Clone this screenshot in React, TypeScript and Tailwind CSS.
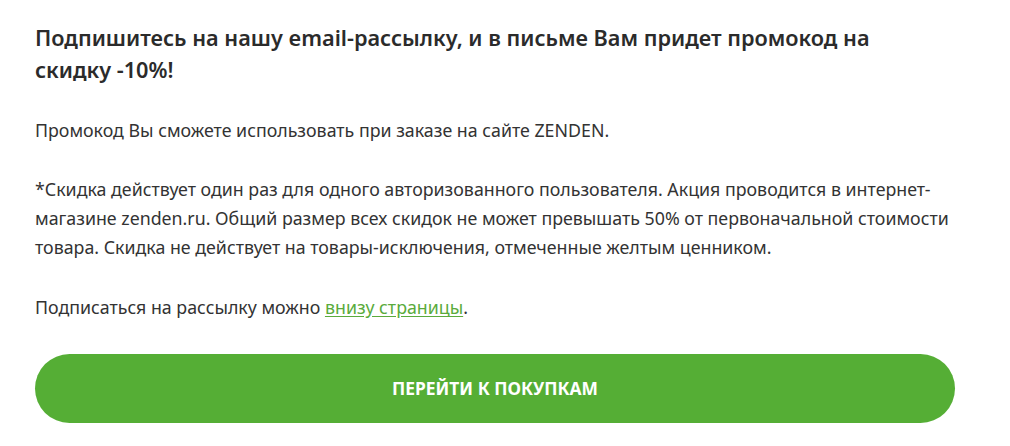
export default function App() {
  return (
    <div className="min-h-[446px] w-[1010px] bg-white" style={{ fontFamily: '"Noto Sans", "Open Sans", sans-serif' }}>
      <div className="w-[920px] pl-[35px] pt-[22px] box-content">
        <h2 className="max-w-[890px] text-[21.7px] font-semibold leading-[32px] text-[#2b2b2b]">
          Подпишитесь на нашу email-рассылку, и в письме Вам придет промокод на скидку -10%!
        </h2>
        <p className="mt-[30px] text-[17.8px] leading-[29px] text-[#333]">
          Промокод Вы сможете использовать при заказе на сайте ZENDEN.
        </p>
        <p className="mt-[30px] text-[17.8px] leading-[29px] text-[#333]">
          *Скидка действует один раз для одного авторизованного пользователя. Акция проводится в интернет-магазине zenden.ru. Общий размер всех скидок не может превышать 50% от первоначальной стоимости товара. Скидка не действует на товары-исключения, отмеченные желтым ценником.
        </p>
        <p className="mt-[31px] text-[17.8px] leading-[29px] text-[#333]">
          Подписаться на рассылку можно{' '}
          <a href="#" className="text-[#5aab3c] underline underline-offset-2">внизу страницы</a>.
        </p>
        <button className="mt-[32px] flex h-[69px] w-[920px] items-center justify-center rounded-full bg-[#55ae35] text-[17.4px] font-bold text-white">
          ПЕРЕЙТИ К ПОКУПКАМ
        </button>
      </div>
    </div>
  );
}
